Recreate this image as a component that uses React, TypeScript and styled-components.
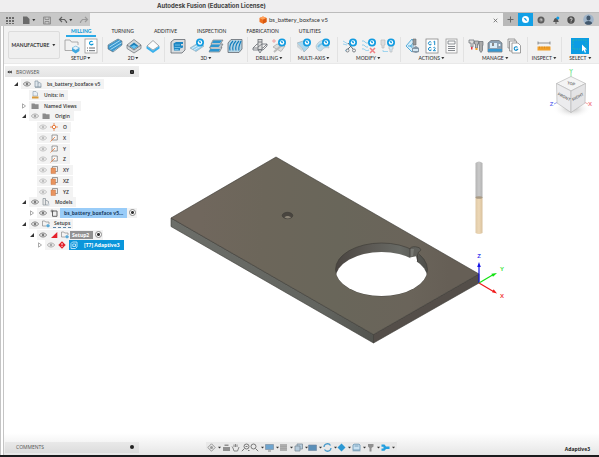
import React from "react";
import styled, { createGlobalStyle, css } from "styled-components";

const BLUE = "#0696d7";
const INK = "#666b71";

const Global = createGlobalStyle`
  * { box-sizing: border-box; }
  html, body { margin: 0; height: 100%; }
  body {
    font-family: "Open Sans", "Noto Sans", sans-serif;
    font-size: 6px;
    line-height: 8px;
    color: #333;
    background: #fff;
  }
  button, input { font: inherit; color: inherit; margin: 0; padding: 0; border: 0; background: none; }
  svg { display: block; flex: none; }
`;

const Window = styled.div`
  display: flex;
  flex-direction: column;
  min-height: 100vh;
  border-bottom: 2px solid #1b1b1d;
`;

const TitleBar = styled.header`
  height: 13px;
  padding: 1px 0 0 157px;
  background: #efeeef;
  border-bottom: 1px solid #bcbcbc;
  font: 700 6px/9px Inter, sans-serif;
  color: #404040;
`;

const DocumentBar = styled.div`
  display: flex;
  height: 13px;
  background: #c8c8c8;
`;

const QuickTools = styled.div`
  display: flex;
  align-items: center;
  gap: 6px;
  width: 90px;
  padding-left: 5px;
  color: #666;
`;

const QuickButton = styled.button`
  display: flex;
  align-items: center;
  gap: 1px;
  height: 12px;
`;

const DocumentTab = styled.div`
  display: flex;
  align-items: center;
  flex: 1;
  padding: 1px 4px 0 169px;
  gap: 2px;
  background: #f2f2f2;
  font-family: Lato, sans-serif;
`;

const DocumentName = styled.span`
  flex: 1;
`;

const TabButton = styled.button<{ $active?: boolean }>`
  display: grid;
  place-items: center;
  width: 15px;
  background: ${(p) => (p.$active ? "#12a0e6" : "transparent")};
`;

const NewTab = styled(TabButton)`
  background: #b9b9b9;
`;

const CloseButton = styled.button`
  display: grid;
  place-items: center;
  width: 7px;
  height: 9px;
`;

const Account = styled.button`
  display: grid;
  place-items: center;
  width: 21px;
`;

const Frame = styled.div`
  display: flex;
  flex: 1;
  flex-direction: column;
  border-left: 4px double #c4c4c4;
`;

const Ribbon = styled.section`
  display: flex;
  height: 38px;
  padding: 0 0 1px 4px;
  background: #f2f2f2;
  border-bottom: 1px solid #e9e9e9;
`;

const Workspace = styled.button`
  display: flex;
  align-items: center;
  justify-content: center;
  gap: 3px;
  width: 52px;
  height: 28px;
  margin-top: 5px;
  border: 1px solid #dcdcdc;
  border-radius: 2px;
  background: #efefef;
  font: 700 5px/8px Lato, sans-serif;
`;

const RibbonBody = styled.div`
  flex: 1;
  display: flex;
  flex-direction: column;
`;

const RibbonTabs = styled.nav`
  display: flex;
  gap: 10px;
  padding-left: 6px;
  font: 5px/8px Lato, sans-serif;
`;

const RibbonTab = styled.button<{ $active?: boolean }>`
  padding: 1px 5px 0;
  height: 11px;
  white-space: nowrap;
  font-weight: 500;
  border-bottom: 2px solid transparent;
  ${(p) =>
    p.$active &&
    css`
      color: ${BLUE};
      font-weight: 700;
      border-bottom-color: #2aa9e6;
    `}
`;

const Groups = styled.div`
  display: grid;
  flex: 1;
  grid-template-columns: 43fr 62fr 83fr 43fr 46fr 63fr 63fr 64fr 34fr 37fr;
`;

const Group = styled.div`
  display: flex;
  flex-direction: column;
  align-items: center;
  padding-top: 1px;
  border-right: 1px solid #e2e2e2;
  &:last-child { border-right: 0; }
`;

const GroupIcons = styled.div`
  display: flex;
  gap: 3px;
`;

const IconButton = styled.button`
  display: block;
  width: 16px;
  height: 16px;
`;

const GroupMenu = styled.button`
  display: flex;
  align-items: center;
  gap: 1px;
  white-space: nowrap;
  font: 500 5px/8px Lato, sans-serif;
`;

const Viewport = styled.main`
  display: grid;
  flex: 1;
  grid-template: minmax(0, 1fr) / minmax(0, 1fr);
  background: linear-gradient(to bottom, #fff calc(100% - 22px), #e6e6e6);
  > * { grid-area: 1 / 1; }
`;

const Scene = styled.svg`
  width: 100%;
  height: 100%;
`;

const Panels = styled.div`
  display: flex;
  flex-direction: column;
  justify-content: space-between;
  padding: 2px 9px 2px 1px;
`;

const PanelHeader = styled.div`
  display: flex;
  align-items: center;
  gap: 5px;
  width: 134px;
  height: 11px;
  padding: 0 5px 0 2px;
  background: linear-gradient(#efefef, #e4e4e4);
  font: 5px/8px "Open Sans", sans-serif;
  color: #555;
`;

const FooterPanel = styled(PanelHeader)`
  padding-left: 11px;
  background: linear-gradient(#e9e9e9, #dcdcdc);
`;

const PanelTitle = styled.span`
  flex: 1;
`;

const SmallButton = styled.button`
  display: grid;
  place-items: center;
  width: 4px;
  height: 8px;
`;

const Tree = styled.ul`
  display: grid;
  grid-auto-rows: 1fr;
  height: 172px;
  margin: 2px 0 0;
  padding: 0;
  list-style: none;
`;

const TreeRow = styled.li<{ $level: number }>`
  display: flex;
  padding-left: ${(p) => 5 + p.$level * 8}px;
`;

const Slot = styled.span`
  display: grid;
  place-items: center;
  width: 11px;
  height: 10px;
`;

const SlotButton = styled(Slot).attrs({ as: "button" })``;

const Pill = styled.div`
  display: flex;
  height: 10px;
  background: #f3f3f3;
`;

type Tone = "plain" | "component" | "setups" | "setup" | "operation";

const Label = styled.button<{ $tone: Tone }>`
  display: flex;
  align-items: center;
  height: 10px;
  padding: 0 4px;
  font-size: 5px;
  font-weight: 600;
  white-space: nowrap;
  ${(p) => p.$tone === "component" && css`
    margin-left: 1px; font-weight: 700; background: #99ccf8; color: #1c3f66;
  `}
  ${(p) => p.$tone === "setups" && css`
    padding: 0 1px; margin: 0 2px; height: 9px; border-bottom: 1px dashed #5e87a8;
  `}
  ${(p) => p.$tone === "setup" && css`
    padding: 0 4px 0 2px; height: 8px; margin-top: 1px; background: #929292; color: #fff; font-weight: 700;
  `}
  ${(p) => p.$tone === "operation" && css`
    gap: 5px; padding: 0 4px 0 0; margin-left: 2px; background: #0a96db; color: #fff; font-weight: 700;
  `}
`;

const Activate = styled.input.attrs({ type: "radio" })`
  appearance: none;
  width: 7px;
  height: 7px;
  margin: 1px 1px 0 2px;
  border: 1px solid #8a8a8a;
  border-radius: 50%;
  background: radial-gradient(circle, #333 0 1px, #fff 2px);
`;

const BottomRow = styled.footer`
  display: flex;
  align-items: center;
  justify-content: space-between;
`;

const NavBar = styled.div`
  display: flex;
  align-items: center;
  justify-content: space-between;
  width: 191px;
  height: 11px;
  padding: 0 2px 0 1px;
  background: #e9e9e9;
`;

const NavButton = styled.button`
  display: flex;
  align-items: center;
  gap: 2px;
`;

const Status = styled.span`
  width: 126px;
  padding-top: 4px;
  text-align: right;
  font-size: 5px;
  font-weight: 700;
  color: #222;
`;

const Caret = () => (
  <svg width="4" height="4" viewBox="0 0 4 4"><path d="M.3 1h3L1.800 3.200z" fill="#333" /></svg>
);

const Badge = () => (
  <g transform="translate(11 4.500)">
    <circle r="4" fill="#129be0" />
    <circle r="2.200" fill="#fff" />
    <path d="M-1.800-1.800L.8-.9 1 .8-.4.4z" fill="#129be0" />
  </g>
);

const line = { fill: "none", stroke: INK, strokeWidth: 0.8 };

const ribbonIcons: Record<string, React.ReactNode> = {
  "New Setup": <><path d="M1 12.500V2h5l1.500 2H14v3M1 12.500h7" {...line} stroke="#999" /><path d="M8 10l3.700-2 3.700 2v3l-3.700 2.400L8 13z" fill="#3fa9e0" /><path d="M8 10l3.700 2.200L15.400 10 11.700 8z" fill="#e4f4fd" stroke="#4d9bc5" strokeWidth=".4" /></>,
  "NC Program": <><rect x="2" y="1" width="12" height="14" fill="#fff" stroke="#999" strokeWidth=".8" /><path d="M9.600 3.800a1.800 1.800 0 1 0 .1 2.500H8.500" fill="none" stroke={BLUE} strokeWidth="1.100" /><path d="M4 10h1M6 10h6M4 12.700h1M6 12.700h6" {...line} strokeWidth="1" /></>,
  "2D Adaptive": <><path d="M1 7L11 1l4 2v4L6 14 1 11z" fill="#3c98ce" /><path d="M1 7l9-5.500M2.500 9L13 2.500M3.500 11.500L15 4.500M6 13.500l9-6.300" fill="none" stroke="#a5dcf8" strokeWidth="1" /><path d="M1 7v4l5 3 9-7V3l-4-2z" {...line} strokeWidth=".6" /></>,
  "2D Pocket": <><path d="M1 7l7-5.500L15 7v3.500L8 15l-7-4.500z" fill="#d5d8da" stroke={INK} strokeWidth=".7" /><path d="M1 7l7 5 7-5" {...line} /><path d="M8 4.500L12.500 8 8 11 3.500 8z" fill="#1d7fb8" /><path d="M8 7l3 1.600L8 10.800 5 8.600z" fill="#64c3f1" /></>,
  "2D Contour": <><path d="M2 8l6-5.500L14 8l-6 4z" fill="#fdfdfd" stroke="#8a8f93" strokeWidth=".8" /><path d="M1.500 8v2.500L8 15l6.500-4.500V8L8 12.500z" fill="#3bb1ec" /></>,
  "Adaptive Clearing": <><path d="M1 4l3-2.500h11V12l-3 3H1z" fill="#d9dcde" stroke={INK} strokeWidth=".8" /><path d="M3.500 5.500L6 4h7v2h-2v1.500h2v2l-3 1v2H4z" fill="#1d86c2" /><path d="M5 7h5M4.500 9.500h6M4.500 11.500h4" stroke="#8ed5f7" strokeWidth=".7" /></>,
  "Pocket Clearing": <><path d="M1 10l8-5 6 3-8 5.500z" fill="#90cdec" stroke="#90a5b2" strokeWidth=".6" /><path d="M3 10.500l7-4M5 12l7-4" stroke="#d8effb" strokeWidth="1" /><Badge /></>,
  "Horizontal": <><path d="M5 2h10l-2.500 4H15l-2 3.500h1L11.500 14H1l2-4H1.500l2-4H3z" fill="#bfc5c9" stroke={INK} strokeWidth=".6" /><path d="M5.500 2.500H14L12 5H4zM3.500 6.500h9L10.500 9H2zM2.500 11h9.500l-1 2.500H1z" fill="#2b95d0" /></>,
  "Parallel": <><path d="M1 5l3-3.500h11V11l-3 3.500H1z" fill="#b4d3e3" stroke={INK} strokeWidth=".8" /><path d="M3 12.500C2 8 4 5 6 3M6 12.500C5 8 7 5 9 3M9 12.500C8 8 10 5 12 3M12 12.500c-1-3 1-7 2-9.500" fill="none" stroke="#0c7bbd" strokeWidth="1.100" /></>,
  "Drill": <><path d="M1 10l4-4h10l-4 4z" fill="#eee" stroke={INK} strokeWidth=".8" /><path d="M1 10v2h10l4-4V6" {...line} /><rect x="6" y="1.500" width="4" height="10" fill="#ddd" stroke={INK} strokeWidth=".8" /><path d="M6 4h4M6 9l4-3M6 11.500L8 15l2-3.500" {...line} /></>,
  "Hole Recognition": <><path d="M2 9l4-3 8 2-4 5.500z" fill="#ddd" stroke="#aaa" strokeWidth=".8" /><path d="M3 14l8-7" stroke="#bbb" strokeWidth="2" /><path d="M1 3h4M3 1v4" stroke="#f0989b" strokeWidth=".9" /><Badge /></>,
  "Swarf": <><path d="M1 5l6-2 6 6-5 5-2-4z" fill="#a8d7ef" stroke="#9ba6ad" strokeWidth=".6" /><path d="M1 5l5 5v3L1 9z" fill="#cfd6da" /><Badge /></>,
  "Multi-Axis Contour": <><path d="M1 8c2-5 7-7 11-5l2 7c-4-1-6 0-8 3-3 0-5-2-5-5z" fill="#c2dfee" stroke="#b0bac0" strokeWidth=".6" /><path d="M3 9c2-3 5-4 8-3" fill="none" stroke="#7cc1e5" strokeWidth="1.500" /><Badge /></>,
  "Trim": <><path d="M1 3l5 3M1 6l4 1M3 13l4-3" stroke="#9fd3ee" strokeWidth="1" /><path d="M6 5l5 6M11 6l-5 5" {...line} strokeWidth="1" /><circle cx="5.500" cy="12.500" r="1.500" {...line} /><circle cx="12" cy="12.500" r="1.500" {...line} /><Badge /></>,
  "Delete Passes": <><path d="M1 3c3-1 3 3 6 2M1 7c3-1 3 3 6 2M1 11c3-1 3 3 7 1" fill="none" stroke="#8ccdec" strokeWidth="1" /><path d="M9 10l5 5M14 10l-5 5" stroke="#ee8085" strokeWidth="1.500" /><Badge /></>,
  "Replace Tool": <><path d="M1 2h4v5H4v3H2V7H1z" fill="#ddd" stroke="#bbb" strokeWidth=".7" /><path d="M9 8h4v3h-1v3h-2v-3H9z" fill="#d5e9f4" stroke="#bbb" strokeWidth=".7" /><path d="M3 12v1.500h5" fill="none" stroke="#8ccdec" strokeWidth=".8" /><Badge /></>,
  "Simulate": <><path d="M7 1L1 8l6 6 2-2-3.500-4L9 4z" fill="#d5eefb" stroke="#339bd0" strokeWidth=".8" /><path d="M3 8h6" stroke="#339bd0" strokeWidth=".8" /><path d="M8 1h3v6H8z" fill="#999" stroke={INK} strokeWidth=".6" /><path d="M7 10l4-2 3 2v4l-3 1-4-1z" fill="#8395a4" /><path d="M8 11h5v2H8z" fill="#d4e8f4" /></>,
  "Post Process": <><rect x="2" y="1" width="12" height="14" fill="#fff" stroke="#888" strokeWidth=".8" /><path d="M7.300 4.300a1.600 1.600 0 1 0 0 2H6.300M9.500 3.800l1.200-.6v3.900M7.300 10a1.600 1.600 0 1 0 0 2H6.300M9.300 9.800c1-1.200 2.600 0 1.600 1.200L9.300 12.700h2.500" fill="none" stroke="#168bc8" strokeWidth="1" /></>,
  "Setup Sheet": <><rect x="3" y="1" width="11" height="14" fill="#f9f9f9" stroke="#999" strokeWidth=".8" /><path d="M5 3h7v3H5z" {...line} strokeWidth=".7" /><path d="M5 8.500h7M5 10.500h7M5 12.500h7" {...line} /></>,
  "Tool Library": <><path d="M1 2h5v3H5v4H3V5H1z" fill="#ddd" stroke={INK} strokeWidth=".7" /><path d="M3 9h1.500v2.500H3z" fill="#e8303b" /><path d="M6.500 3h4v3h-1v4h-2V6h-1z" fill="#bbb" stroke={INK} strokeWidth=".7" /><path d="M7.500 10h2v2h-2z" fill="#f5a324" /><path d="M11 3.500h4v4h-.5v5l-1.500 2-1.500-2v-5H11z" fill="#aaa" stroke={INK} strokeWidth=".7" /></>,
  "Machine Library": <><path d="M1 5l3-2.500h8l3 2.500v9H1z" fill="#8ba0b2" stroke={INK} strokeWidth=".7" /><path d="M3 5h7v5H3z" fill="#d9edf9" /><path d="M5 5h2v3H5z" fill="#888" /><path d="M1 11h14v2.500H1z" fill="#3797cf" /><circle cx="12.500" cy="7" r="1" fill="#fff" /></>,
  "Template Library": <><path d="M2 1h7v9H2z" fill="#eee" stroke="#888" strokeWidth=".8" /><path d="M3.500 3h7v10h-7z" fill="#f5f5f5" stroke="#888" strokeWidth=".8" /><path d="M6 5h6l2.500 2.500V15H6z" fill="#fff" stroke="#888" strokeWidth=".8" /><path d="M11.500 9.500a1.800 1.800 0 1 0 .2 1.800h-1.300" fill="none" stroke="#0b8bcc" strokeWidth="1.100" /></>,
  "Measure": <><path d="M2 3.500v3M14 3.500v3M2 5h12" {...line} strokeWidth=".7" /><path d="M1.500 8.500h13v4h-13z" fill="#f3a12b" /><path d="M3.500 8.500v2M6 8.500v2M8.500 8.500v2M11 8.500v2M13 8.500v2" stroke="#c4780e" strokeWidth=".5" /></>,
};

const groups: { name: string; icons: string[] }[] = [
  { name: "SETUP", icons: ["New Setup", "NC Program"] },
  { name: "2D", icons: ["2D Adaptive", "2D Pocket", "2D Contour"] },
  { name: "3D", icons: ["Adaptive Clearing", "Pocket Clearing", "Horizontal", "Parallel"] },
  { name: "DRILLING", icons: ["Drill", "Hole Recognition"] },
  { name: "MULTI-AXIS", icons: ["Swarf", "Multi-Axis Contour"] },
  { name: "MODIFY", icons: ["Trim", "Delete Passes", "Replace Tool"] },
  { name: "ACTIONS", icons: ["Simulate", "Post Process", "Setup Sheet"] },
  { name: "MANAGE", icons: ["Tool Library", "Machine Library", "Template Library"] },
  { name: "INSPECT", icons: ["Measure"] },
];

const SelectButton = styled(IconButton)`
  width: 18px;
  background: #0a9ce4;
`;

type IconName = "eye" | "hidden" | "faint" | "component" | "units" | "folder" | "origin" | "axis" | "plane" | "models" | "link" | "setups" | "warn" | "error" | "operation";

const eyeShape = (color: string) => (
  <g fill="none" stroke={color} strokeWidth=".8"><path d="M1.300 5c1.700-2.700 5.700-2.700 7.400 0-1.700 2.700-5.700 2.700-7.400 0z" /><circle cx="5" cy="5" r="1" fill={color} /></g>
);

const treeIcons: Record<IconName, React.ReactNode> = {
  eye: eyeShape("#707070"),
  hidden: eyeShape("#a0a0a0"),
  faint: eyeShape("#b9b9b9"),
  component: <path d="M2 2h3v6H2zM5 4c2-1 3 0 3 1.500V8H5M2 8.300h6.300" fill="#dfe7ed" stroke="#8393a0" strokeWidth=".7" />,
  units: <><path d="M3 1.500h3l1.500 1.500v3H3z" fill="#e8eef4" stroke="#8899a8" strokeWidth=".6" /><path d="M2 6.500h6.500v2H2z" fill="#d99a3b" /></>,
  folder: <path d="M1.500 2.500h3l.6.8h3.500v4.700H1.500z" fill="#8b8b8b" />,
  origin: <><path d="M5 1v8M1 5h8" stroke="#e98b52" strokeWidth=".9" /><circle cx="5" cy="5" r="1.700" fill="#fff" stroke="#e47a3c" strokeWidth="1" /></>,
  axis: <><path d="M3 2h5.300v5H3z" fill="#f8f8f8" stroke="#777" strokeWidth=".7" /><path d="M1.500 8.500L6 4" stroke="#e47a3c" strokeWidth=".8" /></>,
  plane: <><path d="M3.500 1.500h5v5h-5z" fill="#eee" stroke="#777" strokeWidth=".7" /><path d="M2 3h4.500v5.500H2z" fill="#e8935e" stroke="#bf6d3a" strokeWidth=".4" /></>,
  models: <><path d="M2 1.500h2.500V8H2zM4.500 3l3 1.500V8h-3" fill="#e9e9e9" stroke="#868f96" strokeWidth=".7" /><path d="M6.500 6.500h2v2h-2z" fill="#ccd5dc" /></>,
  link: <><path d="M3.500 3h4.500v5.300H3.500z" fill="#eee" stroke="#555" strokeWidth=".9" /><path d="M1.500 3h3M3 1.500v3" stroke="#555" strokeWidth=".7" /></>,
  setups: <><path d="M1.500 7V2h2.300l.8 1H8v2M1.500 7H5" fill="none" stroke="#888" strokeWidth=".7" /><path d="M5.300 6L7 5l1.700 1v1.500L7 8.600 5.300 7.500z" fill="#5ba9d6" /></>,
  warn: <path d="M8.300 2v6H2z" fill="#e5202b" />,
  error: <><path d="M5 1.300L8.700 5 5 8.700 1.300 5z" fill="#e01f28" /><path d="M5 3v2.300M5 6v1" stroke="#fff" strokeWidth=".9" /></>,
  operation: <path d="M2 3.500L3.500 2H8v5L6.500 8.500H2zM3.800 4H6.500v2.500h-2.700z" fill="none" stroke="#bfe5fb" strokeWidth=".9" />,
};

const TreeIcon = ({ name }: { name: IconName }) => (
  <svg width="10" height="10" viewBox="0 0 10 10">{treeIcons[name]}</svg>
);

interface Node {
  level: number;
  label: string;
  fold?: "open" | "closed";
  icons: IconName[];
  tone?: Tone;
  active?: boolean;
}

const nodes: Node[] = [
  { level: 0, label: "bs_battery_boxface v5", fold: "open", icons: ["eye", "component"] },
  { level: 1, label: "Units: in", icons: ["units"] },
  { level: 1, label: "Named Views", fold: "closed", icons: ["folder"] },
  { level: 1, label: "Origin", fold: "open", icons: ["hidden", "folder"] },
  { level: 2, label: "O", icons: ["faint", "origin"] },
  { level: 2, label: "X", icons: ["faint", "axis"] },
  { level: 2, label: "Y", icons: ["faint", "axis"] },
  { level: 2, label: "Z", icons: ["faint", "axis"] },
  { level: 2, label: "XY", icons: ["faint", "plane"] },
  { level: 2, label: "XZ", icons: ["faint", "plane"] },
  { level: 2, label: "YZ", icons: ["faint", "plane"] },
  { level: 1, label: "Models", fold: "open", icons: ["eye", "models"] },
  { level: 2, label: "bs_battery_boxface v5…", fold: "closed", icons: ["eye", "link"], tone: "component", active: true },
  { level: 1, label: "Setups", fold: "open", icons: ["eye", "setups"], tone: "setups" },
  { level: 2, label: "Setup2", fold: "open", icons: ["eye", "warn", "setups"], tone: "setup", active: true },
  { level: 3, label: "[T7] Adaptive3", fold: "closed", icons: ["hidden", "error"], tone: "operation" },
];

const Fold = ({ state }: { state: "open" | "closed" }) => (
  <svg width="6" height="6" viewBox="0 0 6 6">
    {state === "open" ? <path d="M5 1v4H1z" fill="#333" /> : <path d="M1.500.8v4.400L4.500 3z" fill="#fff" stroke="#888" strokeWidth=".7" />}
  </svg>
);

const navTools: { name: string; menu?: boolean; art: React.ReactNode }[] = [
  { name: "Orbit", menu: true, art: <><path d="M4.500.8L8.200 4.500 4.500 8.200.8 4.500z" fill="none" stroke="#8d8d8d" strokeWidth=".9" /><circle cx="4.500" cy="4.500" r="1.500" fill="#999" /></> },
  { name: "Look At", art: <path d="M1 4h7v4H1zM2.500 1.500h4V3h-4z" fill="#909090" /> },
  { name: "Pan", art: <path d="M2 5L1 3.500M2 5l1 3h3.500L8 4M3 4V1.500M4.500 4V1M6 4V1.500" fill="none" stroke="#888" strokeWidth="1" /> },
  { name: "Zoom", art: <path d="M.8 8.200l2.500-2.500M8 3.500a2.500 2.500 0 1 1-5 0 2.500 2.500 0 0 1 5 0M7 7.500h1.500M4.500 3.500h2" fill="none" stroke="#777" strokeWidth="1" /> },
  { name: "Fit", menu: true, art: <path d="M8.200 8.200L5.500 5.500M6 3.500a2.500 2.500 0 1 1-5 0 2.500 2.500 0 0 1 5 0" fill="none" stroke="#777" strokeWidth="1" /> },
  { name: "Display Settings", menu: true, art: <><path d="M.5 1.500h8v5h-8z" fill="#6fa5cf" stroke="#8090a0" strokeWidth=".7" /><path d="M3 8h3" stroke="#888" /></> },
  { name: "Grid and Snaps", menu: true, art: <><path d="M1 1h7v7H1z" fill="#b0b0b0" /><path d="M1 3.300h7M1 5.700h7" stroke="#999" strokeWidth=".6" /></> },
  { name: "Viewports", menu: true, art: <path d="M1 3h5v5H1zM3 3V1h5.500v5H6" fill="#b6cbdb" stroke="#7e8d99" strokeWidth=".8" /> },
  { name: "Tool Display", menu: true, art: <path d="M.5 2h8v5.500h-8z" fill="#5a8fb8" stroke="#7085a0" strokeWidth=".6" /> },
  { name: "Refresh", menu: true, art: <path d="M1 4a3.500 3.500 0 0 1 6.500-1.500M8 5a3.500 3.500 0 0 1-6.500 1.500" fill="none" stroke="#4a9bcb" strokeWidth="1.300" /> },
  { name: "Stock", menu: true, art: <path d="M4.500.5l4 4-4 4-4-4z" fill="#2c98d3" /> },
  { name: "Machine", menu: true, art: <path d="M1 2l1-.8h5L8 2v5H1zM2.500 3h4M.5 7.800h8" fill="#c9e2f2" stroke="#6d97b4" strokeWidth=".9" /> },
  { name: "Holder", menu: true, art: <path d="M2 1h5.500v2.500L5.500 5v3.500h-2V5L2 3.500z" fill="#909090" /> },
  { name: "Toolpath", menu: true, art: <path d="M.5 1.500h3l1.500 2h3.500v2.500H5L3.500 7.800h-3V5.600h2V3.700h-2z" fill="#229fe0" /> },
];

const quick: { name: string; menu?: boolean; art: React.ReactNode }[] = [
  { name: "Data panel", art: <path d="M1 2h2v2H1zM4 2h2v2H4zM7 2h2v2H7zM1 5h2v2H1zM4 5h2v2H4zM7 5h2v2H7zM1 8h2v1H1zM4 8h2v1H4zM7 8h2v1H7z" fill="#6a6a6a" /> },
  { name: "File", menu: true, art: <path d="M2 1.500h4l2.500 2.500V9H2z" fill="#6a6a6a" /> },
  { name: "Save", art: <path d="M1.500 2h7v7h-7zM3 2v2.500h4V2M3 9V6.500h4V9" fill="none" stroke="#8a8a8a" strokeWidth=".9" /> },
  { name: "Undo", menu: true, art: <path d="M4 2L1.500 4.500 4 7M2 4.500h4.500L8.500 7v1" fill="none" stroke="#606060" strokeWidth="1.200" /> },
  { name: "Redo", menu: true, art: <path d="M6 2l2.500 2.500L6 7M8 4.500H3.500L1.500 7v1" fill="none" stroke="#9a9a9a" strokeWidth="1.200" /> },
];

const Model = () => (
  <Scene viewBox="4 64 595 391" role="img" aria-label="Boxface plate with tool">
    <defs>
      <linearGradient id="top" gradientUnits="userSpaceOnUse" x1="200" y1="240" x2="450" y2="250">
        <stop offset="0" stopColor="#70675d" /><stop offset=".25" stopColor="#6c665a" /><stop offset=".55" stopColor="#69665a" /><stop offset=".85" stopColor="#6a645a" /><stop offset="1" stopColor="#665f56" />
      </linearGradient>
      <linearGradient id="side"><stop offset="0" stopColor="#6c6e69" /><stop offset=".75" stopColor="#62645f" /><stop offset="1" stopColor="#53544f" /></linearGradient>
      <linearGradient id="wall"><stop offset="0" stopColor="#4a4541" /><stop offset=".35" stopColor="#5b5853" /><stop offset=".7" stopColor="#686a65" /><stop offset="1" stopColor="#4d4d49" /></linearGradient>
      <linearGradient id="tan"><stop offset="0" stopColor="#dfc9a7" /><stop offset=".5" stopColor="#edd8b6" /><stop offset="1" stopColor="#d8c09c" /></linearGradient>
      <linearGradient id="steel"><stop offset="0" stopColor="#b4b4b4" /><stop offset=".5" stopColor="#c9c9c9" /><stop offset="1" stopColor="#b2b2b2" /></linearGradient>
      <radialGradient id="shadow"><stop offset="0" stopColor="#999" stopOpacity=".7" /><stop offset="1" stopColor="#fff" stopOpacity="0" /></radialGradient>
      <clipPath id="bore"><ellipse cx="381.500" cy="269.500" rx="46" ry="26.500" /></clipPath>
    </defs>
    <g strokeLinejoin="round" stroke="#3b3934" strokeWidth=".6">
      <path d="M171 218l202.500 116.500v8.500L171 226.500z" fill="url(#side)" />
      <path d="M373.500 334.500L479 274v9l-105.500 60z" fill="#544e49" />
      <path d="M276 157l203 117-105.500 60.500L171 218z" fill="url(#top)" />
      <ellipse cx="287.500" cy="215.500" rx="5.300" ry="3.200" fill="#49453f" />
      <path d="M284.500 217.500c1-2 5-2 6.500 0-2 1.200-4.500 1.200-6.500 0z" fill="#8b8476" stroke="none" />
      <ellipse cx="381.500" cy="269.500" rx="46" ry="26.500" fill="url(#wall)" />
    </g>
    <ellipse cx="381.500" cy="278.500" rx="46" ry="26.500" fill="#fff" clipPath="url(#bore)" />
    <path d="M410 248.500c1-2 5-2.200 8-1.200 3.500 1.200 3.500 3.500.5 4.700v3.500L416 258l-6-1z" fill="#60605b" />
    <path d="M410 248.500c1-2 5-2.200 8-1.200 3.500 1.200 3.500 3.500.5 4.700l-1 3" fill="none" stroke="#393733" strokeWidth=".6" />
    <path d="M410 249v8l3-1 1-7z" fill="#777873" />
    <path d="M410 257.500l6-1.200 1.500 6-7-3.500z" fill="#fff" />
    <path d="M410 248.500v8.500M417.500 255v7" stroke="#393733" strokeWidth=".7" />
    <path d="M475.500 163q3.500-3 7 0v35h-7z" fill="url(#steel)" />
    <path d="M475.500 198h7v35q-3.500 2-7 0z" fill="url(#tan)" />
    <ellipse cx="479" cy="197.500" rx="3.500" ry="1.300" fill="#a99a85" />
    <g strokeWidth="1.200" fontFamily="Liberation Sans, Arial, sans-serif" fontSize="6" fontWeight="700" textAnchor="middle">
      <path d="M479 283v-16" stroke="#1212e8" /><path d="M479 262l1.800 5h-3.600z" fill="#1212e8" />
      <path d="M479 283l14-8.300" stroke="#12e212" /><path d="M497 273l-4 3.800-1.600-3z" fill="#12e212" />
      <path d="M479 283l14 8.300" stroke="#f01818" /><path d="M497 293.500l-5-1.300 1.700-3z" fill="#f01818" />
      <text x="479" y="258" fill="#3a3aee">Z</text><text x="502" y="271" fill="#35e535">Y</text><text x="502" y="298" fill="#f23a3a">X</text>
    </g>
    <ellipse cx="572" cy="109" rx="19" ry="9" fill="url(#shadow)" />
    <path d="M571 73v5" stroke="#5ade7a" strokeWidth=".7" />
    <path d="M554 104l4-2" stroke="#6670ee" strokeWidth=".7" />
    <path d="M588 104l-4-2" stroke="#f08088" strokeWidth=".7" />
    <g strokeLinejoin="round" stroke="#b9b9b9" strokeWidth=".7">
      <path d="M571 76.500l14.500 7L571 91l-14.500-7.500z" fill="#f4f4f4" />
      <path d="M556.500 83.500L571 91v21.500L557 103z" fill="#ececee" />
      <path d="M585.500 83.500L571 91v21.500l14-9.500z" fill="#e4e4e6" />
    </g>
    <g fontFamily="Liberation Sans, Arial, sans-serif" fontWeight="700" textAnchor="middle" fontSize="4" fill="#777">
      <text transform="translate(571 85) rotate(12)">TOP</text>
      <text transform="translate(563.500 98) rotate(28)">FRONT</text>
      <text transform="translate(578.500 98) rotate(-28)">RIGHT</text>
    </g>
    <g fontFamily="Liberation Sans, Arial, sans-serif" fontWeight="700" textAnchor="middle" fontSize="6">
      <text x="571" y="73" fill="#6fe38a">Y</text><text x="551.500" y="106" fill="#6670ee">Z</text><text x="590" y="106" fill="#f08088">X</text>
    </g>
  </Scene>
);

export default function App() {
  return (
    <Window>
      <Global />
      <TitleBar>Autodesk Fusion (Education License)</TitleBar>
      <DocumentBar>
        <QuickTools>
          {quick.map((q) => (
            <QuickButton key={q.name} aria-label={q.name}>
              <svg width="10" height="10" viewBox="0 0 10 10">{q.art}</svg>
              {q.menu && <Caret />}
            </QuickButton>
          ))}
        </QuickTools>
        <DocumentTab>
          <svg width="8" height="8" viewBox="0 0 8 8"><path d="M4 .5l3.500 1.600v4L4 7.700.5 6.100v-4z" fill="#f0701e" /><path d="M4 .5l3.500 1.600L4 3.800.5 2.100z" fill="#ffa35c" /><path d="M4 3.800l3.500-1.700v4L4 7.700z" fill="#d95a10" /></svg>
          <DocumentName>bs_battery_boxface v5</DocumentName>
          <CloseButton aria-label="Close tab"><svg width="5" height="5" viewBox="0 0 5 5"><path d="M.7.7l3.600 3.600M4.300.7L.7 4.300" stroke="#666" strokeWidth=".8" /></svg></CloseButton>
        </DocumentTab>
        <NewTab aria-label="New tab"><svg width="7" height="7" viewBox="0 0 7 7"><path d="M3.500.5v6M.5 3.500h6" stroke="#666" /></svg></NewTab>
        <TabButton $active aria-label="Extensions"><svg width="9" height="9" viewBox="0 0 9 9"><circle cx="4.500" cy="4.500" r="3.500" fill="#fff" /><path d="M2.500 2.800L5 3.500l1.300 2.700-2-1z" fill="#12a0e6" /></svg></TabButton>
        <TabButton aria-label="Job status"><svg width="8" height="8" viewBox="0 0 8 8"><circle cx="4" cy="4" r="3.500" fill="#5d5d5d" /><circle cx="4" cy="4" r="1.800" fill="#8d8d8d" /><path d="M4 2.500V4h1.300" fill="none" stroke="#ddd" strokeWidth=".7" /></svg></TabButton>
        <TabButton aria-label="Notifications"><svg width="8" height="8" viewBox="0 0 8 8"><path d="M1 6c1-.7.800-4 3-4s2 3.300 3 4z" fill="#555" /><path d="M3 6.500h2v1H3z" fill="#555" /><circle cx="5.800" cy="2" r="1.500" fill="#139de4" /></svg></TabButton>
        <TabButton aria-label="Help"><svg width="8" height="8" viewBox="0 0 8 8"><circle cx="4" cy="4" r="3.700" fill="#4e4e4e" /><path d="M2.900 3.200c0-1.600 2.300-1.500 2.300-.1C5.200 4 4 3.900 4 4.900M4 5.600v.8" fill="none" stroke="#fff" strokeWidth=".8" /></svg></TabButton>
        <Account aria-label="Account"><svg width="11" height="11" viewBox="0 0 11 11"><circle cx="5.500" cy="5.500" r="5.300" fill="#9fb4c9" /><ellipse cx="5.500" cy="4" rx="2.100" ry="2.600" fill="#42586d" /><path d="M1.800 9.200c.8-3 6.600-3 7.400 0-2 2-5.400 2-7.400 0z" fill="#42586d" /></svg></Account>
      </DocumentBar>
      <Frame>
        <Ribbon>
          <Workspace>MANUFACTURE <Caret /></Workspace>
          <RibbonBody>
            <RibbonTabs>
              {["MILLING", "TURNING", "ADDITIVE", "INSPECTION", "FABRICATION", "UTILITIES"].map((t, i) => (
                <RibbonTab key={t} $active={i === 0}>{t}</RibbonTab>
              ))}
            </RibbonTabs>
            <Groups>
              {groups.map((g) => (
                <Group key={g.name}>
                  <GroupIcons>
                    {g.icons.map((n) => (
                      <IconButton key={n} aria-label={n}><svg width="16" height="16" viewBox="0 0 16 16">{ribbonIcons[n]}</svg></IconButton>
                    ))}
                  </GroupIcons>
                  <GroupMenu>{g.name} <Caret /></GroupMenu>
                </Group>
              ))}
              <Group>
                <SelectButton aria-label="Select">
                  <svg width="18" height="16" viewBox="0 0 18 16"><path d="M2 2h13v9H2z" fill="none" stroke="#37bd9b" strokeWidth=".7" strokeDasharray="1.500 1" /><path d="M11 6.500v7l1.700-1.500 1.200 2.800 1.200-.5-1.200-2.700H16z" fill="#fff" /></svg>
                </SelectButton>
                <GroupMenu>SELECT <Caret /></GroupMenu>
              </Group>
            </Groups>
          </RibbonBody>
        </Ribbon>
        <Viewport>
          <Model />
          <Panels>
            <div>
              <PanelHeader>
                <SmallButton aria-label="Collapse browser"><svg width="5" height="4" viewBox="0 0 5 4"><path d="M2.500.5v3L.3 2zM4.700.5v3L2.500 2z" fill="#222" /></svg></SmallButton>
                <PanelTitle>BROWSER</PanelTitle>
                <SmallButton aria-label="Browser options"><svg width="4" height="4" viewBox="0 0 4 4"><rect width="4" height="4" rx="1" fill="#222" /><path d="M1 2h2" stroke="#999" strokeWidth=".5" /></svg></SmallButton>
              </PanelHeader>
              <Tree>
                {nodes.map((n, i) => (
                  <TreeRow key={i} $level={n.level}>
                    {n.fold ? <SlotButton aria-label={`Toggle ${n.label}`}><Fold state={n.fold} /></SlotButton> : <Slot />}
                    <Pill>
                      {n.icons.map((icon) =>
                        icon === "eye" || icon === "hidden" || icon === "faint" ? (
                          <SlotButton key={icon} aria-label={`Visibility of ${n.label}`}><TreeIcon name={icon} /></SlotButton>
                        ) : (
                          <Slot key={icon}><TreeIcon name={icon} /></Slot>
                        )
                      )}
                      <Label $tone={n.tone ?? "plain"}>
                        {n.tone === "operation" && <TreeIcon name="operation" />}
                        {n.label}
                      </Label>
                      {n.active && <Activate name={`active-${i}`} aria-label={`Activate ${n.label}`} defaultChecked />}
                    </Pill>
                  </TreeRow>
                ))}
              </Tree>
            </div>
            <BottomRow>
              <FooterPanel>
                <PanelTitle>COMMENTS</PanelTitle>
                <SmallButton aria-label="Add comment"><svg width="4" height="4" viewBox="0 0 4 4"><circle cx="2" cy="2" r="2" fill="#222" /></svg></SmallButton>
              </FooterPanel>
              <NavBar>
                {navTools.map((t) => (
                  <NavButton key={t.name} aria-label={t.name}>
                    <svg width="9" height="9" viewBox="0 0 9 9">{t.art}</svg>
                    {t.menu && <svg width="3" height="3" viewBox="0 0 3 3"><path d="M0 .8h3L1.500 2.600z" fill="#333" /></svg>}
                  </NavButton>
                ))}
              </NavBar>
              <Status>Adaptive3</Status>
            </BottomRow>
          </Panels>
        </Viewport>
      </Frame>
    </Window>
  );
}
